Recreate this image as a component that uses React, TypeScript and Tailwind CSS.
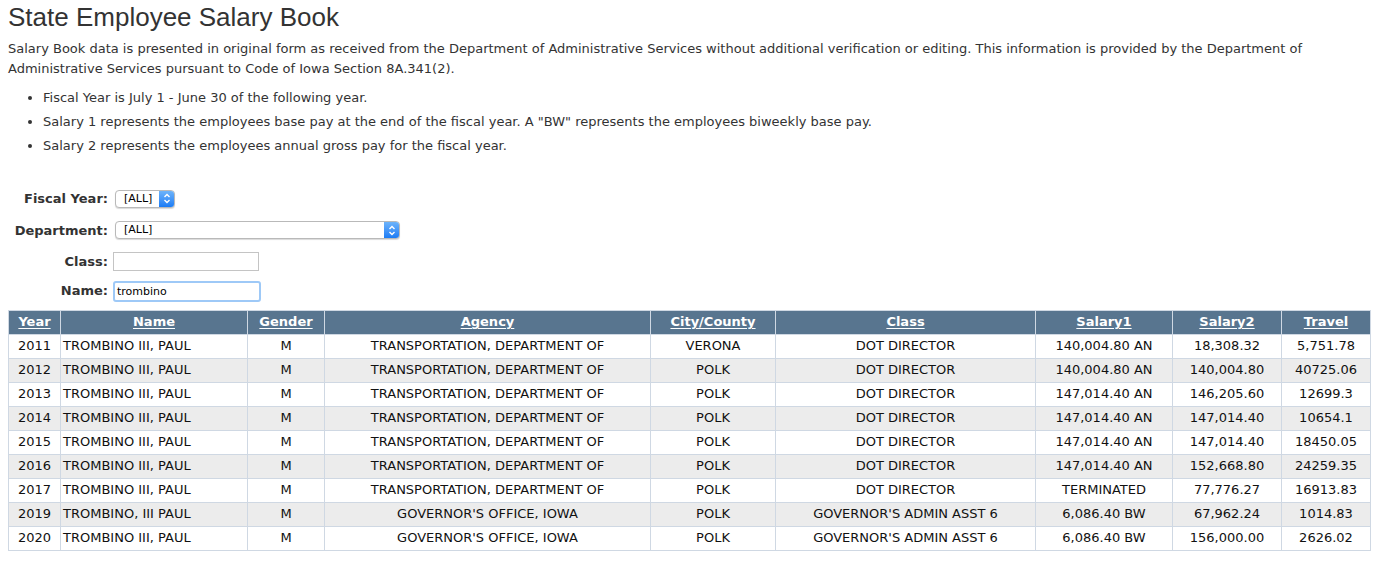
const rows = [
  ["2011", "TROMBINO III, PAUL", "M", "TRANSPORTATION, DEPARTMENT OF", "VERONA", "DOT DIRECTOR", "140,004.80 AN", "18,308.32", "5,751.78"],
  ["2012", "TROMBINO III, PAUL", "M", "TRANSPORTATION, DEPARTMENT OF", "POLK", "DOT DIRECTOR", "140,004.80 AN", "140,004.80", "40725.06"],
  ["2013", "TROMBINO III, PAUL", "M", "TRANSPORTATION, DEPARTMENT OF", "POLK", "DOT DIRECTOR", "147,014.40 AN", "146,205.60", "12699.3"],
  ["2014", "TROMBINO III, PAUL", "M", "TRANSPORTATION, DEPARTMENT OF", "POLK", "DOT DIRECTOR", "147,014.40 AN", "147,014.40", "10654.1"],
  ["2015", "TROMBINO III, PAUL", "M", "TRANSPORTATION, DEPARTMENT OF", "POLK", "DOT DIRECTOR", "147,014.40 AN", "147,014.40", "18450.05"],
  ["2016", "TROMBINO III, PAUL", "M", "TRANSPORTATION, DEPARTMENT OF", "POLK", "DOT DIRECTOR", "147,014.40 AN", "152,668.80", "24259.35"],
  ["2017", "TROMBINO III, PAUL", "M", "TRANSPORTATION, DEPARTMENT OF", "POLK", "DOT DIRECTOR", "TERMINATED", "77,776.27", "16913.83"],
  ["2019", "TROMBINO, III PAUL", "M", "GOVERNOR'S OFFICE, IOWA", "POLK", "GOVERNOR'S ADMIN ASST 6", "6,086.40 BW", "67,962.24", "1014.83"],
  ["2020", "TROMBINO III, PAUL", "M", "GOVERNOR'S OFFICE, IOWA", "POLK", "GOVERNOR'S ADMIN ASST 6", "6,086.40 BW", "156,000.00", "2626.02"],
];

const columns = [
  { label: "Year", width: "w-[52px]" },
  { label: "Name", width: "w-[187px]" },
  { label: "Gender", width: "w-[77px]" },
  { label: "Agency", width: "w-[326px]" },
  { label: "City/County", width: "w-[125px]" },
  { label: "Class", width: "w-[260px]" },
  { label: "Salary1", width: "w-[137px]" },
  { label: "Salary2", width: "w-[109px]" },
  { label: "Travel", width: "w-[89px]" },
];

const Arrows = () => (
  <svg width="8" height="11" viewBox="0 0 8 11" fill="none" stroke="white" strokeWidth="1.4">
    <path d="M1.5 4 L4 1.5 L6.5 4" />
    <path d="M1.5 7 L4 9.5 L6.5 7" />
  </svg>
);

const FakeSelect = ({ width }: { width: string }) => (
  <div className={`flex h-[18px] ${width} items-stretch overflow-hidden rounded-[4px] border border-[#b9b9b9] bg-white shadow-[0_1px_1px_rgba(0,0,0,0.15)]`}>
    <span className="flex-1 pl-[8px] text-[11px] font-normal leading-[16px] text-black">[ALL]</span>
    <span className="flex w-[15px] items-center justify-center bg-gradient-to-b from-[#6cb3fa] to-[#1a7cf5]">
      <Arrows />
    </span>
  </div>
);

export default function App() {
  return (
    <div className="min-h-[561px] bg-white px-[8px] text-[#333] [font-family:Verdana,'DejaVu_Sans',sans-serif]">
      <h1 className="pt-[2px] text-[26px] leading-[30px] text-[#333] [font-family:'Liberation_Sans',Arial,sans-serif]">
        State Employee Salary Book
      </h1>
      <p className="mt-[7px] text-[13px] leading-[20px]">
        Salary Book data is presented in original form as received from the Department of Administrative Services without additional verification or editing. This information is provided by the Department of Administrative Services pursuant to Code of Iowa Section 8A.341(2).
      </p>
      <ul className="mt-[9px] list-disc pl-[35px] text-[13px] leading-[20px]">
        <li className="mb-[4px]">Fiscal Year is July 1 - June 30 of the following year.</li>
        <li className="mb-[4px]">Salary 1 represents the employees base pay at the end of the fiscal year. A "BW" represents the employees biweekly base pay.</li>
        <li>Salary 2 represents the employees annual gross pay for the fiscal year.</li>
      </ul>

      <div className="mt-[33px] grid grid-cols-[100px_1fr] items-center gap-x-[5px] text-[13px] font-bold text-[#333]">
        <span className="text-right">Fiscal Year:</span>
        <div className="pl-[2px]"><FakeSelect width="w-[60px]" /></div>
        <span className="mt-[12px] text-right">Department:</span>
        <div className="mt-[12px] pl-[2px]"><FakeSelect width="w-[285px]" /></div>
        <span className="mt-[12px] text-right">Class:</span>
        <div className="mt-[12px]">
          <div className="h-[19px] w-[146px] border border-[#c4c4c4] bg-white" />
        </div>
        <span className="mt-[9px] text-right">Name:</span>
        <div className="mt-[9px]">
          <div className="h-[21px] w-[148px] rounded-[3px] border-[2px] border-[#9ec9f7] bg-white pl-[2px] text-[11px] font-normal leading-[17px] text-black">
            trombino
          </div>
        </div>
      </div>

      <table className="mt-[8px] w-[1362px] table-fixed border-collapse text-[13px]">
        <thead>
          <tr className="h-[24px] bg-[#58758f]">
            {columns.map((c) => (
              <th key={c.label} className={`${c.width} border border-[#cfd8e3] text-center font-bold text-white underline underline-offset-[2px]`}>
                {c.label}
              </th>
            ))}
          </tr>
        </thead>
        <tbody>
          {rows.map((r, i) => (
            <tr key={r[0]} className={`h-[24px] ${i % 2 === 1 ? "bg-[#ececec]" : "bg-white"}`}>
              {r.map((cell, j) => (
                <td
                  key={j}
                  className={`border border-[#cfd8e3] px-[2px] text-[#111] ${j === 1 ? "text-left" : "text-center"}`}
                >
                  {cell}
                </td>
              ))}
            </tr>
          ))}
        </tbody>
      </table>
    </div>
  );
}
